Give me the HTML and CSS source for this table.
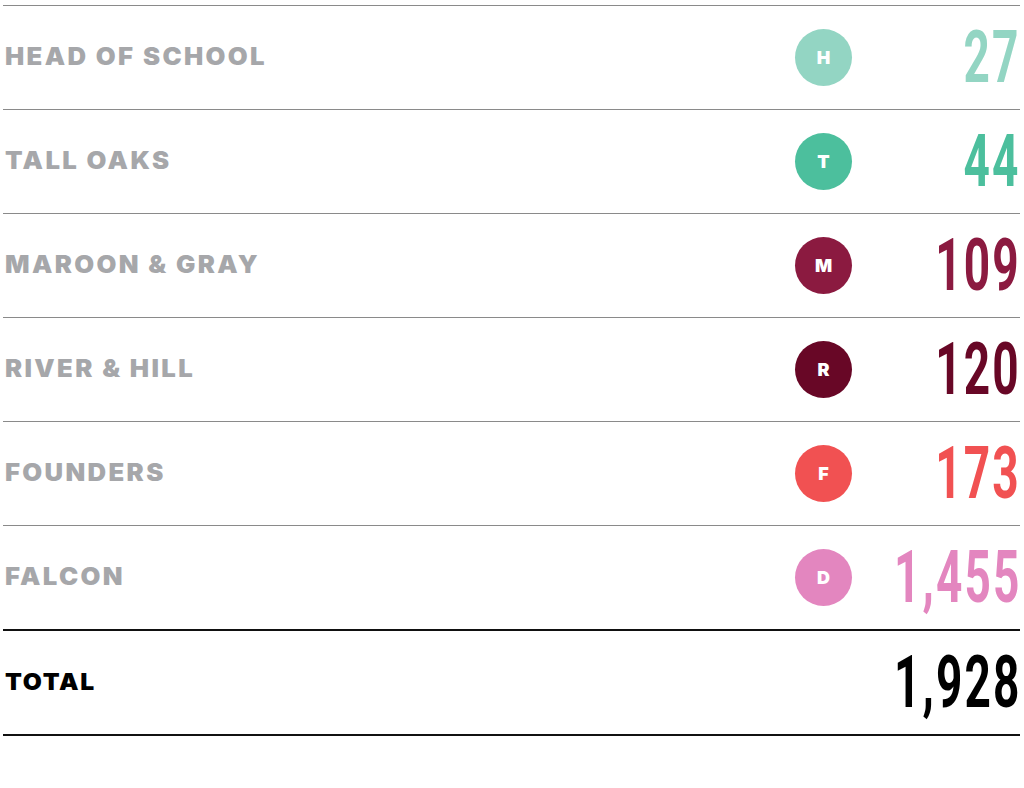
FILE: index.html
```html
<!DOCTYPE html>
<html>
<head>
<meta charset="utf-8">
<link rel="stylesheet" href="styles.css">
</head>
<body>
<div class="table">
  <div class="row">
    <div class="label"><span>HEAD OF SCHOOL</span></div>
    <div class="badge c-h">H</div>
    <div class="num c-h-t"><span>27</span></div>
  </div>
  <div class="row">
    <div class="label"><span>TALL OAKS</span></div>
    <div class="badge c-t">T</div>
    <div class="num c-t-t"><span>44</span></div>
  </div>
  <div class="row">
    <div class="label"><span>MAROON &amp; GRAY</span></div>
    <div class="badge c-m">M</div>
    <div class="num c-m-t"><span>109</span></div>
  </div>
  <div class="row">
    <div class="label"><span>RIVER &amp; HILL</span></div>
    <div class="badge c-r">R</div>
    <div class="num c-r-t"><span>120</span></div>
  </div>
  <div class="row">
    <div class="label"><span>FOUNDERS</span></div>
    <div class="badge c-f">F</div>
    <div class="num c-f-t"><span>173</span></div>
  </div>
  <div class="row">
    <div class="label"><span>FALCON</span></div>
    <div class="badge c-d">D</div>
    <div class="num c-d-t"><span>1,455</span></div>
  </div>
  <div class="row total">
    <div class="label"><span>TOTAL</span></div>
    <div class="spacer"></div>
    <div class="num"><span>1,928</span></div>
  </div>
</div>
</body>
</html>
```
FILE: styles.css
```css
html, body {
  margin: 0;
  padding: 0;
  background: #ffffff;
}
.table {
  margin: 5px 4px 0 3px;
  border-bottom: 2px solid #111;
}
.row {
  display: grid;
  grid-template-columns: 1fr 57px 168px;
  align-items: center;
  height: 103px;
  border-top: 1px solid #8a8a8a;
}
.row.total {
  border-top: 2px solid #111;
  height: 103px;
}
.label {
  font-family: Inter, "Open Sans", sans-serif;
  font-weight: 900;
  font-size: 24px;
  letter-spacing: 2.2px;
  color: #a6a7aa;
  padding-left: 2px;
  margin-top: -2px;
  white-space: nowrap;
}
.label span {
  display: inline-block;
  transform: scaleX(1.07);
  transform-origin: left center;
}
.total .label {
  color: #000;
  font-size: 23px;
  letter-spacing: 1.6px;
}
.badge {
  width: 57px;
  height: 57px;
  border-radius: 50%;
  display: flex;
  align-items: center;
  justify-content: center;
  color: #fff;
  font-family: Inter, sans-serif;
  font-weight: 900;
  font-size: 18px;
}
.num {
  display: flex;
  justify-content: flex-end;
  font-family: Roboto, sans-serif;
  font-weight: 700;
  font-size: 73px;
  line-height: 1;
  white-space: nowrap;
}
.num span {
  display: inline-block;
  flex: none;
  transform: scaleX(0.63);
  transform-origin: right center;
  letter-spacing: 3.4px;
  margin-right: -1px;
}
.c-h { background: #93d5c3; }
.c-h-t { color: #93d5c3; }
.c-t { background: #4cbf9d; }
.c-t-t { color: #4cbf9d; }
.c-m { background: #8b1a40; }
.c-m-t { color: #8b1a40; }
.c-r { background: #680726; }
.c-r-t { color: #680726; }
.c-f { background: #f15152; }
.c-f-t { color: #f15152; }
.c-d { background: #e386bf; }
.c-d-t { color: #e386bf; }
.total .num { color: #000; }
```
